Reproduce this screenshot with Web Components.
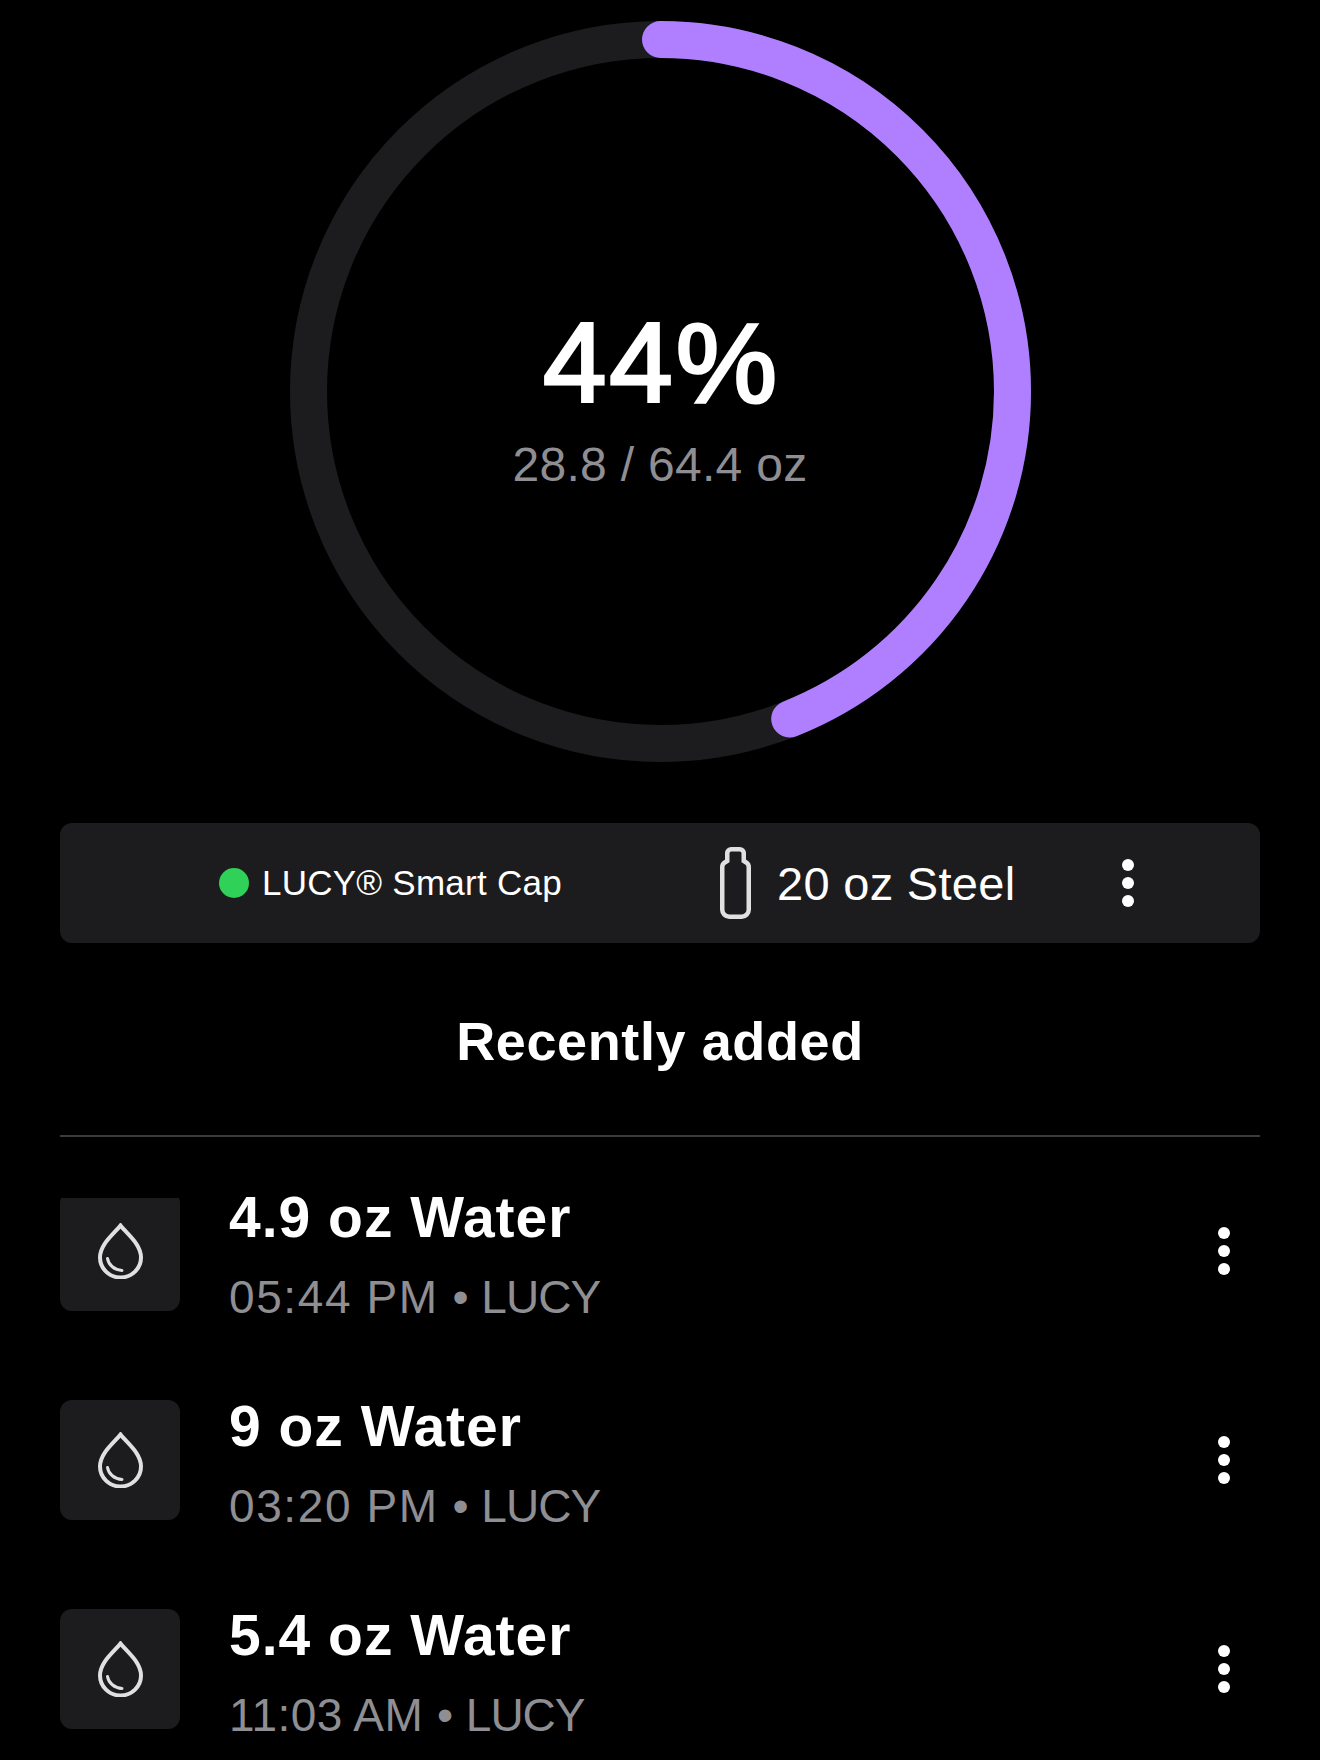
<!DOCTYPE html>
<html lang="en">
<head>
<meta charset="utf-8">
<title>Water intake</title>
<style>
  html, body { margin: 0; background: #000; }
  body { width: 1320px; height: 1760px; overflow: hidden; font-family: "Liberation Sans", Arial, sans-serif; color: #fff; }
  main { display: block; padding: 0 60px; }
  .time { letter-spacing: 1.6px; word-spacing: 0; }
  .time.tight { letter-spacing: 0.4px; }
</style>
</head>
<body>
<main>
  <hydration-ring percent="44">
    <span slot="value">44%</span>
    <span slot="detail">28.8 / 64.4 oz</span>
  </hydration-ring>
  <bottle-bar>
    <span slot="cap">LUCY® Smart Cap</span>
    <span slot="bottle">20 oz Steel</span>
  </bottle-bar>
  <section-heading>Recently added</section-heading>
  <drink-list>
    <drink-row scrolled>
      <span slot="title">4.9 oz Water</span>
      <span slot="meta"><span class="time">05:44 PM</span> • LUCY</span>
    </drink-row>
    <drink-row>
      <span slot="title">9 oz Water</span>
      <span slot="meta"><span class="time">03:20 PM</span> • LUCY</span>
    </drink-row>
    <drink-row>
      <span slot="title">5.4 oz Water</span>
      <span slot="meta"><span class="time tight">11:03 AM</span> • LUCY</span>
    </drink-row>
  </drink-list>
</main>

<script>
class HydrationRing extends HTMLElement {
  constructor() {
    super();
    this.attachShadow({ mode: 'open' });
  }

  connectedCallback() {
    const percent = Number(this.getAttribute('percent')) || 0;
    const radius = 352;
    const length = 2 * Math.PI * radius;
    const filled = length * percent / 100;
    this.shadowRoot.innerHTML = `
      <style>
        :host { display: block; padding-top: 21px; }
        .stack { display: grid; width: 741px; height: 741px; margin: 0 auto; }
        .stack > * { grid-area: 1 / 1; }
        svg { display: block; }
        .label { display: flex; flex-direction: column; align-items: center; padding-top: 282px; }
        /* regular + stroke: Liberation has no medium weight */
        .value { font-size: 114px; line-height: 120px; font-weight: 400; letter-spacing: 3px; padding-left: 3px; -webkit-text-stroke: 3px #fff; }
        .detail { font-size: 48px; line-height: 56px; margin-top: 14px; letter-spacing: 0.3px; color: #8e8e93; }
      </style>
      <div class="stack">
        <svg width="741" height="741" viewBox="0 0 741 741">
          <circle cx="370.500" cy="370.500" r="${radius}" fill="none" stroke="#1c1c1e" stroke-width="37"/>
          <circle cx="370.500" cy="370.500" r="${radius}" fill="none" stroke="#b07fff" stroke-width="37"
            stroke-linecap="round" stroke-dasharray="${filled} ${length}" transform="rotate(-90 370.500 370.500)"/>
        </svg>
        <div class="label">
          <div class="value"><slot name="value"></slot></div>
          <div class="detail"><slot name="detail"></slot></div>
        </div>
      </div>
    `;
  }
}

class KebabMenu extends HTMLElement {
  constructor() {
    super();
    this.attachShadow({ mode: 'open' });
    this.shadowRoot.innerHTML = `
      <style>
        :host { display: flex; flex-direction: column; gap: 6px; }
        i { display: block; width: 12px; height: 12px; border-radius: 50%; background: #fff; }
      </style>
      <i></i><i></i><i></i>
    `;
  }
}

class BottleBar extends HTMLElement {
  constructor() {
    super();
    this.attachShadow({ mode: 'open' });
    this.shadowRoot.innerHTML = `
      <style>
        :host {
          display: flex; align-items: center; box-sizing: border-box;
          height: 120px; margin-top: 61px; padding-left: 159px;
          background: #1c1c1e; border-radius: 12px;
        }
        .dot { width: 30px; height: 30px; border-radius: 50%; background: #30d158; flex: none; }
        .cap { font-size: 35px; margin-left: 13px; width: 458px; flex: none; letter-spacing: 0.25px; }
        svg { display: block; flex: none; }
        .bottle { font-size: 47px; margin-left: 26px; width: 345px; flex: none; letter-spacing: 0.3px; }
      </style>
      <div class="dot"></div>
      <div class="cap"><slot name="cap"></slot></div>
      <svg width="31" height="72" viewBox="0 0 31 72" fill="none" stroke="#e0e0e0" stroke-width="4.5">
        <path d="M7.250 14V6.250a4 4 0 0 1 4-4h8.500a4 4 0 0 1 4 4V14l2.500 1.500q2.500 1.500 2.500 4.500V62.750a7 7 0 0 1-7 7H9.250a7 7 0 0 1-7-7V20q0-3 2.500-4.500Z"/>
      </svg>
      <div class="bottle"><slot name="bottle"></slot></div>
      <kebab-menu></kebab-menu>
    `;
  }
}

class SectionHeading extends HTMLElement {
  constructor() {
    super();
    this.attachShadow({ mode: 'open' });
    this.shadowRoot.innerHTML = `
      <style>
        :host {
          display: block; box-sizing: border-box; height: 194px; padding-top: 64px;
          border-bottom: 2px solid #3a3a3c; text-align: center;
          font-size: 54px; line-height: 68px; font-weight: 700; letter-spacing: 0.6px;
        }
      </style>
      <slot></slot>
    `;
  }
}

class DrinkList extends HTMLElement {
  constructor() {
    super();
    this.attachShadow({ mode: 'open' });
    this.shadowRoot.innerHTML = `
      <style>
        :host { display: flex; flex-direction: column; gap: 89px; margin-top: 54px; }
      </style>
      <slot></slot>
    `;
  }
}

class DrinkRow extends HTMLElement {
  constructor() {
    super();
    this.attachShadow({ mode: 'open' });
    this.shadowRoot.innerHTML = `
      <style>
        :host { display: flex; align-items: center; height: 120px; padding-right: 30px; }
        .tile {
          width: 120px; height: 120px; flex: none; border-radius: 12px; background: #1c1c1e;
          display: flex; align-items: center; justify-content: center;
        }
        /* first row has scrolled under the divider */
        :host([scrolled]) .tile { clip-path: inset(7px 0 0 0); }
        svg { display: block; }
        .text { flex: 1; margin-left: 49px; padding-top: 7px; display: flex; flex-direction: column; }
        .title { font-size: 57px; line-height: 68px; font-weight: 700; letter-spacing: 1px; }
        .meta { font-size: 46px; line-height: 58px; margin-top: 17px; letter-spacing: -1px; word-spacing: 2px; color: #8e8e93; }
      </style>
      <div class="tile">
        <svg width="45" height="56" viewBox="0 0 45 56" fill="none" stroke="#e0e0e0" stroke-width="4" stroke-linecap="round">
          <path d="M22.500 2.500C29 11 43 21 43 34.500a20.500 20 0 0 1-41 0C2 21 16 11 22.500 2.500Z"/>
          <path stroke-width="3" d="M9.500 35.500c1 6.500 7 11.500 14.500 12"/>
        </svg>
      </div>
      <div class="text">
        <div class="title"><slot name="title"></slot></div>
        <div class="meta"><slot name="meta"></slot></div>
      </div>
      <kebab-menu></kebab-menu>
    `;
  }
}

customElements.define('kebab-menu', KebabMenu);
customElements.define('hydration-ring', HydrationRing);
customElements.define('bottle-bar', BottleBar);
customElements.define('section-heading', SectionHeading);
customElements.define('drink-list', DrinkList);
customElements.define('drink-row', DrinkRow);
</script>
</body>
</html>
